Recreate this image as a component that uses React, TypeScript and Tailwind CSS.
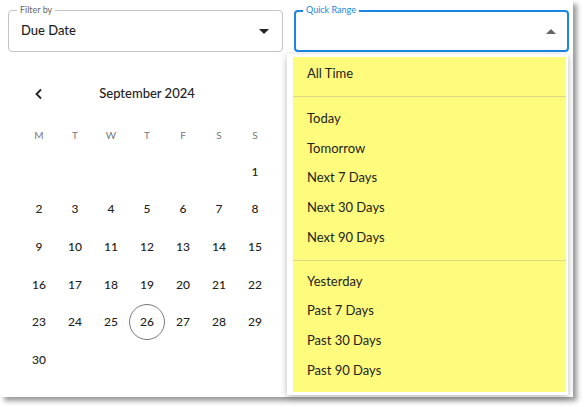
import React from "react";

const font = { fontFamily: "Lato, 'Noto Sans', sans-serif" };

const weekdays = ["M", "T", "W", "T", "F", "S", "S"];

// September 2024 starts on a Sunday
const days: (number | null)[] = [null, null, null, null, null, null, ...Array.from({ length: 30 }, (_, i) => i + 1)];

const groups = [
  ["All Time"],
  ["Today", "Tomorrow", "Next 7 Days", "Next 30 Days", "Next 90 Days"],
  ["Yesterday", "Past 7 Days", "Past 30 Days", "Past 90 Days"],
];

const Caret = ({ up, className }: { up?: boolean; className: string }) => (
  <svg width="10" height="5" viewBox="0 0 10 5" className={className}>
    {up ? <path d="M0 5 L5 0 L10 5 Z" fill="currentColor" /> : <path d="M0 0 L10 0 L5 5 Z" fill="currentColor" />}
  </svg>
);

const App = () => {
  return (
    <div className="w-[584px] h-[407px] bg-white" style={font}>
      <div className="relative w-[573px] h-[397px] bg-white shadow-[4px_4px_5px_rgba(0,0,0,0.4)]">
        {/* select fields */}
        <div className="flex gap-[11px] pt-[10px] pl-[8px]">
          <div className="relative flex items-center justify-between w-[275px] h-[42px] border border-[#c4c4c4] rounded-[4px] pl-[12px] pr-[13px]">
            <span className="absolute -top-[7px] left-[8px] px-[3px] bg-white text-[9px] leading-[12px] text-[#666]">Filter by</span>
            <span className="text-[13px] font-medium text-[#1f1f1f]">Due Date</span>
            <Caret className="text-[#222]" />
          </div>
          <div className="relative flex items-center justify-end w-[275px] h-[42px] border-2 border-[#1a86e2] rounded-[4px] pr-[11px]">
            <span className="absolute -top-[8px] left-[7px] px-[3px] bg-white text-[9px] leading-[12px] text-[#1a86e2]">Quick Range</span>
            <Caret up className="text-[#666]" />
          </div>
        </div>

        {/* calendar */}
        <div className="ml-[21px] w-[252px] mt-[24px]">
          <div className="relative flex items-center justify-center h-[36px]">
            <svg width="12" height="12" viewBox="0 0 12 12" className="absolute left-[12px] text-[#222]">
              <path d="M8 1.5 L3.5 6 L8 10.5" fill="none" stroke="currentColor" strokeWidth="1.8" />
            </svg>
            <span className="text-[13px] font-medium text-[#222]">September 2024</span>
          </div>
          <div className="grid grid-cols-7 mt-[11px] h-[24px] items-center">
            {weekdays.map((d, i) => (
              <span key={i} className="text-center text-[10px] text-[#777]">{d}</span>
            ))}
          </div>
          <div className="grid grid-cols-7 mt-[6px] auto-rows-[37.6px]">
            {days.map((d, i) => (
              <div key={i} className="flex items-center justify-center">
                {d && (
                  <span
                    className={
                      d === 26
                        ? "flex items-center justify-center w-[36px] h-[36px] rounded-full border border-[#777] text-[12px] font-medium text-[#222]"
                        : "text-[12px] font-medium text-[#222]"
                    }
                  >
                    {d}
                  </span>
                )}
              </div>
            ))}
          </div>
        </div>

        {/* quick range menu */}
        <div className="absolute left-[287px] top-[54px] w-[281px] h-[341px] bg-white shadow-[0_2px_7px_rgba(0,0,0,0.28)] pl-[6px] pr-[2px] pt-[3px] pb-[3px]">
          <div className="h-full bg-[#fffb7c] pt-[2px]">
            {groups.map((g, gi) => (
              <div key={gi}>
                {gi > 0 && (
                  <div className={gi === 1 ? "border-t border-[#dcd88a] mt-[7px] mb-[7px]" : "border-t border-[#dcd88a] mt-[7px] mb-[6px]"} />
                )}
                {g.map((item) => (
                  <div key={item} className="h-[29.75px] flex items-center pl-[14px] text-[13px] text-[#222]">
                    {item}
                  </div>
                ))}
              </div>
            ))}
          </div>
        </div>
      </div>
    </div>
  );
};

export default App;
